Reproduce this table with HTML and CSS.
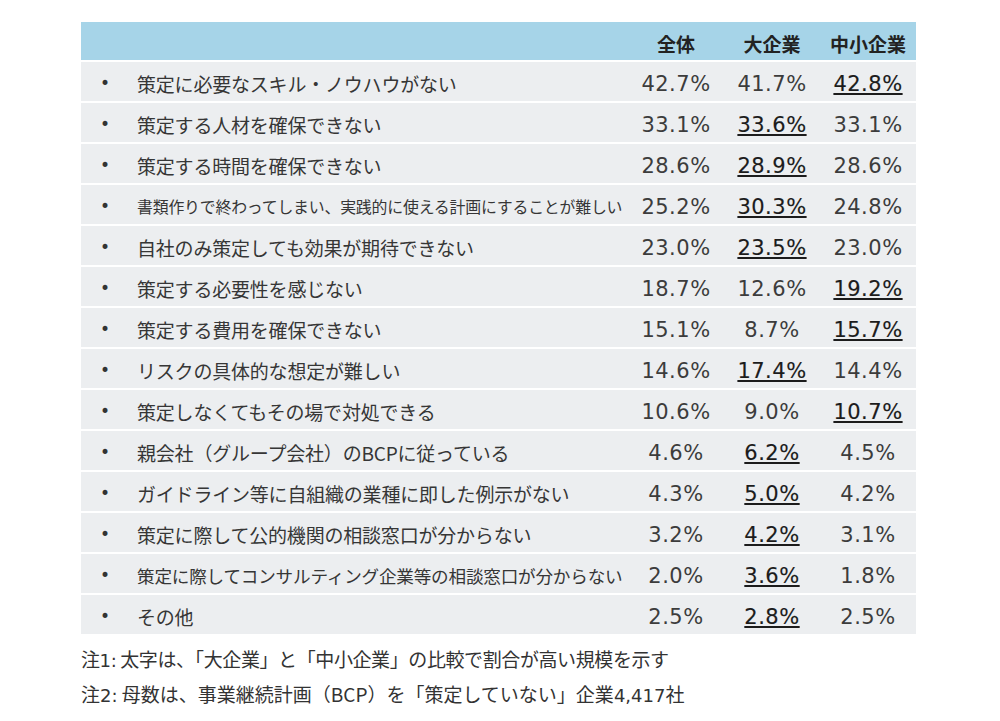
FILE: index.html
```html
<!DOCTYPE html>
<html lang="ja">
<head>
<meta charset="utf-8">
<link rel="stylesheet" href="styles.css">
</head>
<body>
<div class="page">
  <div class="table">
    <div class="row head">
      <div class="label"></div>
      <div class="col">全体</div>
      <div class="col">大企業</div>
      <div class="col">中小企業</div>
    </div>
    <div class="row"><div class="label"><span class="dot">•</span><span class="txt">策定に必要なスキル・ノウハウがない</span></div><div class="val">42.7%</div><div class="val">41.7%</div><div class="val hi">42.8%</div></div>
    <div class="row"><div class="label"><span class="dot">•</span><span class="txt">策定する人材を確保できない</span></div><div class="val">33.1%</div><div class="val hi">33.6%</div><div class="val">33.1%</div></div>
    <div class="row"><div class="label"><span class="dot">•</span><span class="txt">策定する時間を確保できない</span></div><div class="val">28.6%</div><div class="val hi">28.9%</div><div class="val">28.6%</div></div>
    <div class="row"><div class="label"><span class="dot">•</span><span class="txt small">書類作りで終わってしまい、実践的に使える計画にすることが難しい</span></div><div class="val">25.2%</div><div class="val hi">30.3%</div><div class="val">24.8%</div></div>
    <div class="row"><div class="label"><span class="dot">•</span><span class="txt">自社のみ策定しても効果が期待できない</span></div><div class="val">23.0%</div><div class="val hi">23.5%</div><div class="val">23.0%</div></div>
    <div class="row"><div class="label"><span class="dot">•</span><span class="txt">策定する必要性を感じない</span></div><div class="val">18.7%</div><div class="val">12.6%</div><div class="val hi">19.2%</div></div>
    <div class="row"><div class="label"><span class="dot">•</span><span class="txt">策定する費用を確保できない</span></div><div class="val">15.1%</div><div class="val">8.7%</div><div class="val hi">15.7%</div></div>
    <div class="row"><div class="label"><span class="dot">•</span><span class="txt">リスクの具体的な想定が難しい</span></div><div class="val">14.6%</div><div class="val hi">17.4%</div><div class="val">14.4%</div></div>
    <div class="row"><div class="label"><span class="dot">•</span><span class="txt">策定しなくてもその場で対処できる</span></div><div class="val">10.6%</div><div class="val">9.0%</div><div class="val hi">10.7%</div></div>
    <div class="row"><div class="label"><span class="dot">•</span><span class="txt">親会社（グループ会社）のBCPに従っている</span></div><div class="val">4.6%</div><div class="val hi">6.2%</div><div class="val">4.5%</div></div>
    <div class="row"><div class="label"><span class="dot">•</span><span class="txt">ガイドライン等に自組織の業種に即した例示がない</span></div><div class="val">4.3%</div><div class="val hi">5.0%</div><div class="val">4.2%</div></div>
    <div class="row"><div class="label"><span class="dot">•</span><span class="txt">策定に際して公的機関の相談窓口が分からない</span></div><div class="val">3.2%</div><div class="val hi">4.2%</div><div class="val">3.1%</div></div>
    <div class="row"><div class="label"><span class="dot">•</span><span class="txt mid">策定に際してコンサルティング企業等の相談窓口が分からない</span></div><div class="val">2.0%</div><div class="val hi">3.6%</div><div class="val">1.8%</div></div>
    <div class="row"><div class="label"><span class="dot">•</span><span class="txt">その他</span></div><div class="val">2.5%</div><div class="val hi">2.8%</div><div class="val">2.5%</div></div>
  </div>
  <div class="notes">
    <p class="tight">注<span class="num">1:</span> 太字は、「大企業」と「中小企業」の比較で割合が高い規模を示す</p>
    <p>注<span class="num">2:</span> 母数は、事業継続計画（BCP）を「策定していない」企業<span class="num">4,417</span>社</p>
  </div>
</div>
</body>
</html>
```
FILE: styles.css
```css
html, body {
  margin: 0;
  padding: 0;
  background: #ffffff;
}
body {
  font-family: "Noto Sans CJK JP", "Noto Sans", sans-serif;
  color: #363636;
}
.page {
  padding: 22px 0 0 81px;
}
.table {
  width: 835px;
  display: flex;
  flex-direction: column;
  gap: 2px;
}
.row {
  display: grid;
  grid-template-columns: 547px 96px 96px 96px;
  height: 39px;
  background: #eceef0;
  align-items: center;
}
.row.head {
  height: 38px;
  background: #a6d4e8;
}
.col {
  text-align: center;
  font-weight: 700;
  font-size: 19px;
  color: #222;
  padding-top: 4px;
}
.label {
  display: flex;
  align-items: center;
  padding-top: 3px;
}
.dot {
  width: 56px;
  padding-left: 19px;
  box-sizing: border-box;
  font-family: "DejaVu Sans", sans-serif;
  font-size: 17px;
  color: #333;
}
.txt {
  font-size: 19px;
  white-space: nowrap;
  letter-spacing: -0.2px;
}
.txt.small {
  font-size: 15.9px;
}
.txt.mid {
  font-size: 17.6px;
}
.val {
  text-align: center;
  font-family: "DejaVu Sans", sans-serif;
  font-size: 21px;
  letter-spacing: 0.5px;
  color: #3c3c3c;
  padding-top: 4px;
}
.val.hi {
  color: #1c1c1c;
  text-decoration: underline;
  text-decoration-thickness: 2px;
  text-underline-offset: 2px;
  -webkit-text-stroke: 0.15px #1c1c1c;
}
.notes {
  padding-top: 8px;
}
.notes p {
  margin: 0;
  font-size: 19px;
  line-height: 33px;
  color: #333;
}
.notes p.tight {
  letter-spacing: -0.4px;
}
.num {
  font-family: "DejaVu Sans", sans-serif;
  font-size: 18px;
}
```
